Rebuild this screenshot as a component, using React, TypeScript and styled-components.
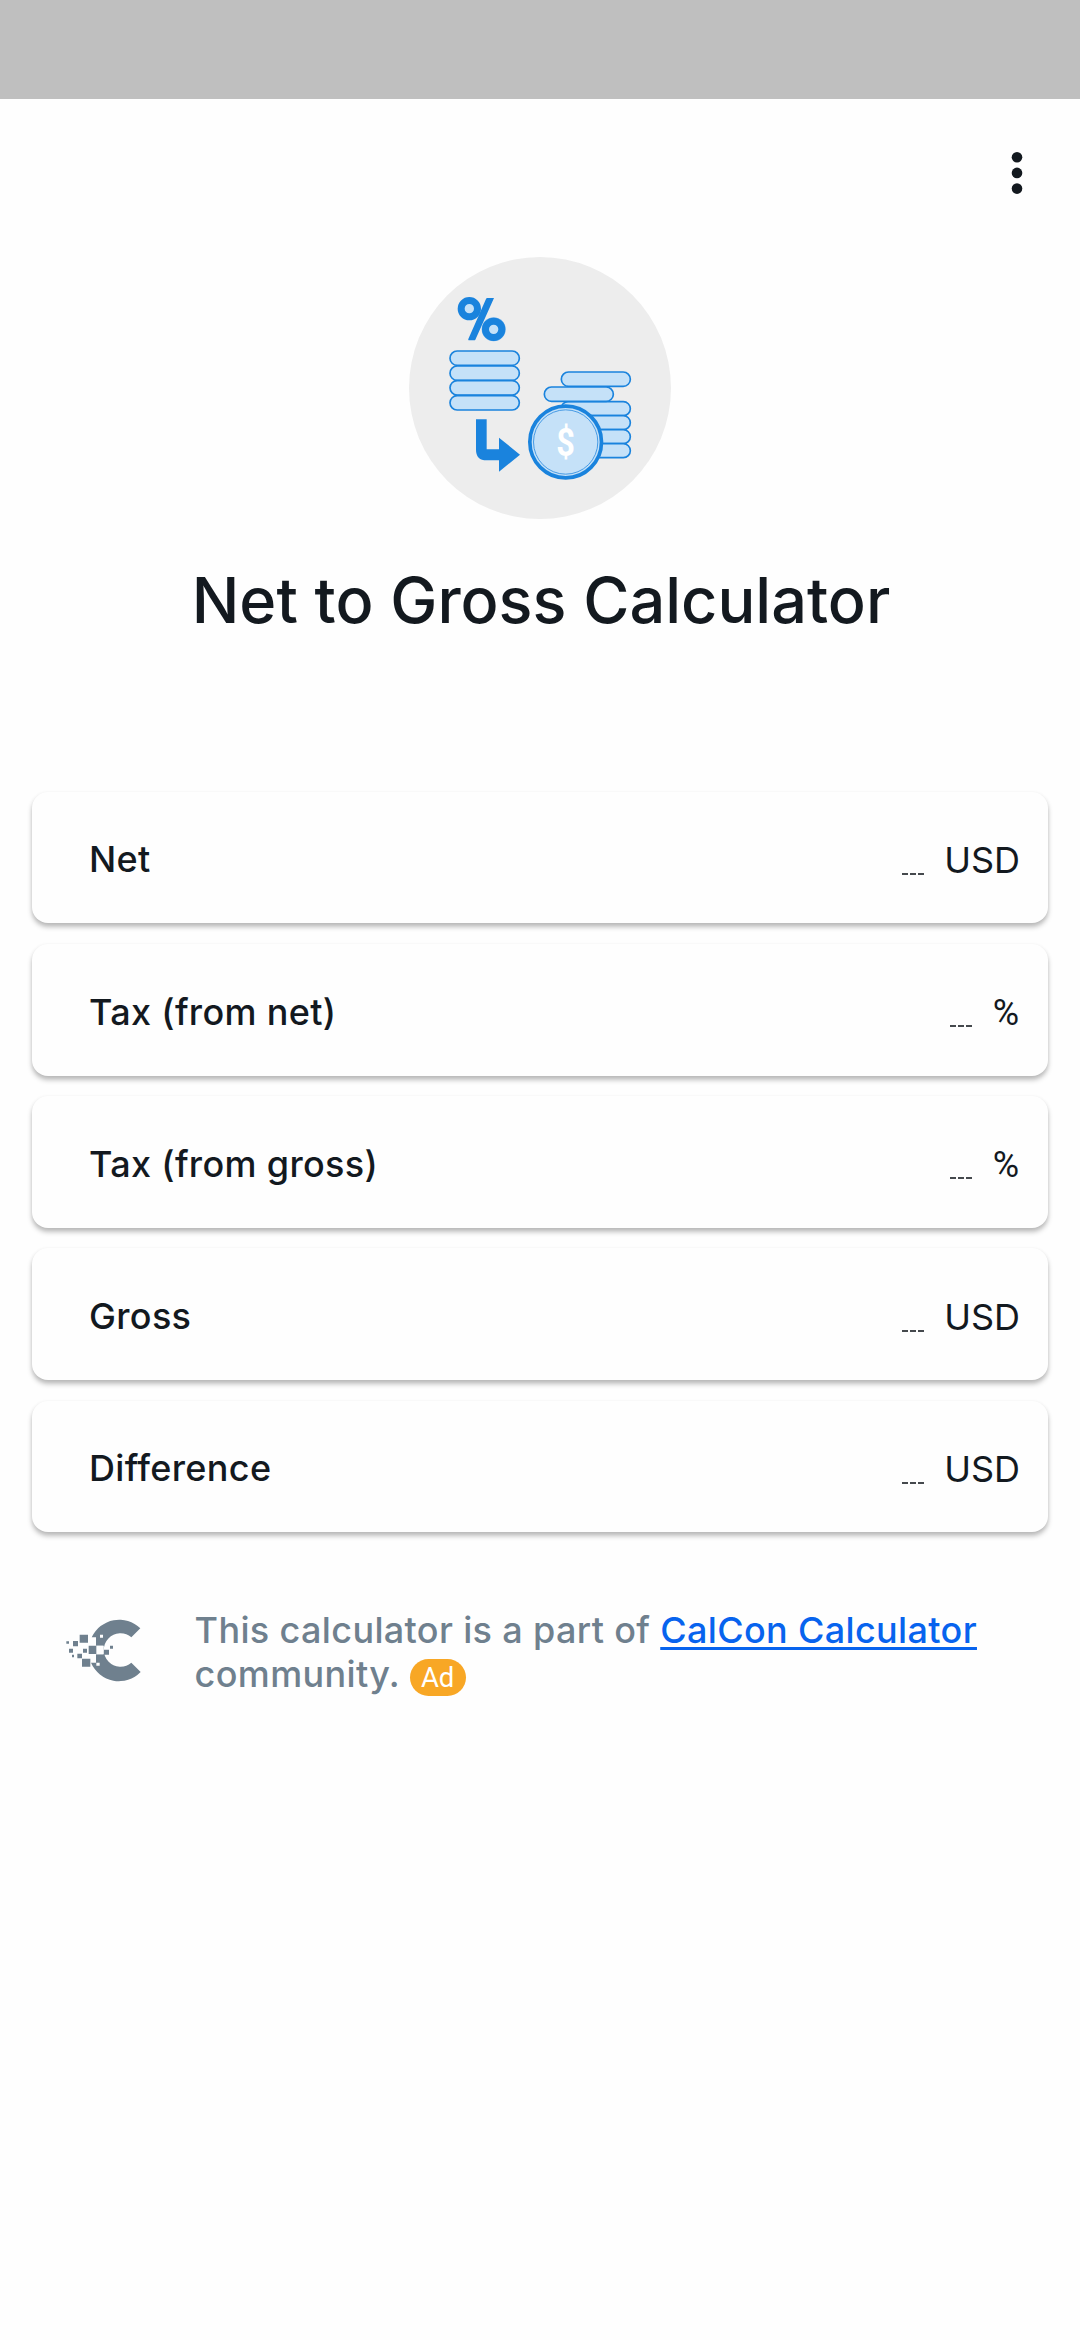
import React from "react";
import styled, { createGlobalStyle } from "styled-components";

const Global = createGlobalStyle`
  *, *::before, *::after { box-sizing: border-box; }
  body { margin: 0; background: #fefefe; }
`;

const Screen = styled.div`
  width: 1080px;
  height: 2340px;
  display: flex;
  flex-direction: column;
  background: #fefefe;
  color: #13191f;
  font-family: Inter, "Liberation Sans", sans-serif;
  overflow: hidden;
`;

const StatusBar = styled.div`
  height: 99px;
  flex: none;
  background: #bfbfbf;
`;

const Toolbar = styled.header`
  height: 147px;
  flex: none;
  display: flex;
  justify-content: flex-end;
  align-items: center;
  padding-right: 39px;
`;

const MenuButton = styled.button`
  width: 48px;
  height: 72px;
  padding: 0;
  border: 0;
  background: none;
  display: flex;
  align-items: center;
  justify-content: center;
`;

const Hero = styled.section`
  display: flex;
  flex-direction: column;
  align-items: center;
  padding-top: 10.6px;
  height: 545.5px;
  flex: none;
`;

const Title = styled.h1`
  margin: 42.4px 0 0;
  padding-left: 2px;
  font-size: 63px;
  line-height: 78px;
  font-weight: 500;
  white-space: nowrap;
`;

const Fields = styled.main`
  display: flex;
  flex-direction: column;
  gap: 20.5px;
  padding: 0 32px;
`;

const Card = styled.div`
  height: 131.75px;
  display: flex;
  align-items: center;
  justify-content: space-between;
  padding: 4px 28px 0 57px;
  border-radius: 16px;
  background: #fefefe;
  box-shadow: 0 4px 5px rgba(0, 0, 0, 0.25), 0 1px 4px rgba(0, 0, 0, 0.06);
`;

const Label = styled.span`
  font-size: 36px;
  line-height: 44px;
  font-weight: 500;
  letter-spacing: 0.33px;
`;

const Value = styled.div`
  display: flex;
  align-items: center;
  gap: 20px;
`;

const Blank = styled.span`
  display: flex;
  gap: 2px;
  padding-top: 29px;
`;

const Dash = styled.i`
  width: 6px;
  height: 2px;
  background: #45494d;
`;

const Unit = styled.span<{ $symbol?: boolean }>`
  font-family: ${(p) => (p.$symbol ? "Roboto" : "Inter")}, sans-serif;
  font-size: 36px;
  line-height: 44px;
  padding-top: 2px;
  padding-left: ${(p) => (p.$symbol ? "1px" : "0")};
  padding-right: ${(p) => (p.$symbol ? "1px" : "0")};
  font-weight: 400;
`;

const Footer = styled.footer`
  display: flex;
  padding: 75.6px 60px 0 62px;
`;

const LogoBox = styled.div`
  width: 132.6px;
  flex: none;
  padding-top: 10px;
`;

const Note = styled.p`
  margin: 0;
  color: #6f808e;
  font-size: 36px;
  line-height: 44px;
  font-weight: 500;
  letter-spacing: 0.35px;
`;

const NoteLink = styled.a`
  color: #0763ee;
  text-decoration: underline;
  text-decoration-thickness: 3px;
  text-underline-offset: 4px;
`;

const Badge = styled.span`
  display: inline-flex;
  align-items: center;
  justify-content: center;
  width: 56px;
  height: 37px;
  border-radius: 19px;
  background: #f8a725;
  color: #fff;
  font-family: Roboto, sans-serif;
  font-size: 27.5px;
  line-height: 37px;
  font-weight: 400;
  letter-spacing: 0;
  vertical-align: baseline;
`;

const blue = "#1a83dd";
const pale = "#c5e1f8";

const HeroArt = () => (
  <svg width="262" height="262" viewBox="27 20 786 786" fill="none">
    <circle cx="420" cy="413" r="393" fill="#ededed" />
    <path d="M262 143H282L226 268Q225 270 222 270H206Q204 270 205 266L258 146Q259 143 262 143Z" fill={blue} />
    <g fill={pale} stroke={blue}>
      <circle cx="208" cy="175" r="24.5" strokeWidth="21" />
      <circle cx="281" cy="237" r="36" fill="#78b7ee" stroke="none" />
      <circle cx="281" cy="237" r="24.5" strokeWidth="21" />
    </g>
    <g fill={pale} stroke={blue} strokeWidth="5">
      {[302, 347, 391, 436].map((y) => (
        <rect key={y} x="150" y={y} width="208" height="43" rx="21.5" />
      ))}
      {[454, 496, 538, 580].map((y) => (
        <rect key={y} x="483" y={y} width="208" height="42" rx="21" />
      ))}
      <rect x="484" y="365" width="207" height="43" rx="21.5" />
      <rect x="433" y="410" width="207" height="43" rx="21.5" />
    </g>
    <path d="M228 507H260V597H297V562L360 613L297 664V630H260Q228 630 228 598Z" fill={blue} />
    <circle cx="497" cy="575" r="107.5" fill={pale} stroke={blue} strokeWidth="11" />
    <circle cx="497" cy="575" r="96.5" stroke="#2c8be0" strokeWidth="2.5" />
    <text
      transform="translate(497 617) scale(0.84 1)"
      textAnchor="middle"
      fontFamily="Roboto, sans-serif"
      fontWeight="700"
      fontSize="116"
      fill="#fff"
    >
      $
    </text>
  </svg>
);

const Logo = () => (
  <svg width="84" height="64" viewBox="36 85 252 192" fill="#6f808e">
    <path d="M271 116L244 143A50 50 0 1 0 244 219L272 247A91 91 0 0 1 123 219H138V194H160V168H138V143H125A91 91 0 0 1 271 116Z" />
    <path d="M139 168h22v26h-22zM150 135h9v9h-9zM139 219h10v9h-10z" fill="#fefefe" />
    <path d="M89 135h25v24H89zM69 154h15v16H69zM49 155h8v7h-8zM57 177h12v12H57zM99 177h12v12H99zM116 168h23v25h-23zM82 192h14v14H82zM66 195h6v8h-6zM96 207h25v24H96zM162 180h15v15h-15zM180 168h9v9h-9z" />
  </svg>
);

const fields = [
  { label: "Net", unit: "USD" },
  { label: "Tax (from net)", unit: "%" },
  { label: "Tax (from gross)", unit: "%" },
  { label: "Gross", unit: "USD" },
  { label: "Difference", unit: "USD" },
];

export default function App() {
  return (
    <Screen>
      <Global />
      <StatusBar />
      <Toolbar>
        <MenuButton aria-label="Menu">
          <svg width="12" height="44" viewBox="0 0 12 44" fill="#13191f">
            <circle cx="6" cy="6.2" r="5.3" />
            <circle cx="6" cy="21.9" r="5.3" />
            <circle cx="6" cy="37.6" r="5.3" />
          </svg>
        </MenuButton>
      </Toolbar>
      <Hero>
        <HeroArt />
        <Title>Net to Gross Calculator</Title>
      </Hero>
      <Fields>
        {fields.map((f) => (
          <Card key={f.label}>
            <Label>{f.label}</Label>
            <Value>
              <Blank>
                <Dash />
                <Dash />
                <Dash />
              </Blank>
              <Unit $symbol={f.unit === "%"}>{f.unit}</Unit>
            </Value>
          </Card>
        ))}
      </Fields>
      <Footer>
        <LogoBox>
          <Logo />
        </LogoBox>
        <Note>
          This calculator is a part of <NoteLink>CalCon Calculator</NoteLink>
          <br />
          community. <Badge>Ad</Badge>
        </Note>
      </Footer>
    </Screen>
  );
}
